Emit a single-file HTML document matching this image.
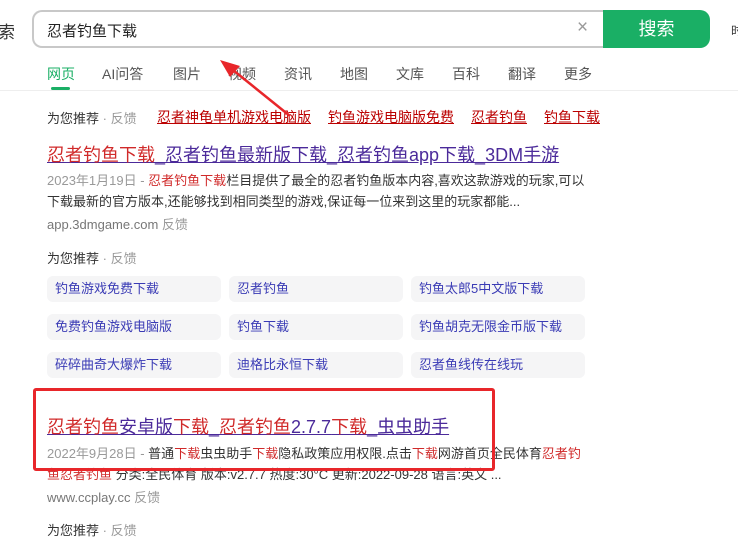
<!DOCTYPE html><html><head><meta charset="utf-8"><style>
body{margin:0;width:738px;height:540px;background:#fff;overflow:hidden;position:relative;font-family:"Liberation Sans","Noto Sans CJK SC",sans-serif;color:#333}
.a{position:absolute;white-space:nowrap}
.r{color:#d02a2a}
.g{color:#999}
.chip{position:absolute;width:174px;height:26px;background:#f5f5f6;border-radius:6px;color:#3a3bb5;font-size:13px;line-height:26px;padding-left:8px;box-sizing:border-box}
.rl{color:#b00;text-decoration:underline;margin-right:17px}
</style></head><body>
<div class="a" style="left:-2px;top:18px;font-size:17px;color:#333">索</div>
<div class="a" style="left:32px;top:10px;width:600px;height:38px;border:2px solid #c8c8c8;border-right:none;border-radius:10px 0 0 10px;box-sizing:border-box"></div>
<div class="a" style="left:47px;top:20px;font-size:15px;color:#222">忍者钓鱼下载</div>
<div class="a" style="left:577px;top:17px;font-size:19px;color:#999">×</div>
<div class="a" style="left:603px;top:10px;width:107px;height:38px;background:#1aaf65;border-radius:0 10px 10px 0;color:#fff;font-size:18px;line-height:38px;text-align:center">搜索</div>
<div class="a" style="left:731px;top:22px;font-size:12px;color:#333">时</div>
<div class="a" style="left:47px;top:64px;font-size:14px;color:#1aaf65">网页</div>
<div class="a" style="left:51px;top:87px;width:19px;height:3px;background:#1aaf65;border-radius:2px"></div>
<div class="a" style="left:102px;top:64px;font-size:14px;color:#555">AI问答</div>
<div class="a" style="left:173px;top:64px;font-size:14px;color:#555">图片</div>
<div class="a" style="left:228px;top:64px;font-size:14px;color:#555">视频</div>
<div class="a" style="left:284px;top:64px;font-size:14px;color:#555">资讯</div>
<div class="a" style="left:340px;top:64px;font-size:14px;color:#555">地图</div>
<div class="a" style="left:396px;top:64px;font-size:14px;color:#555">文库</div>
<div class="a" style="left:452px;top:64px;font-size:14px;color:#555">百科</div>
<div class="a" style="left:508px;top:64px;font-size:14px;color:#555">翻译</div>
<div class="a" style="left:564px;top:64px;font-size:14px;color:#555">更多</div>
<div class="a" style="left:0;top:90px;width:738px;height:1px;background:#eee"></div>
<div class="a" style="left:47px;top:108px;font-size:13px">为您推荐 <span class="g">· 反馈</span></div>
<div class="a" style="left:157px;top:107px;font-size:14px"><span class="rl">忍者神龟单机游戏电脑版</span><span class="rl">钓鱼游戏电脑版免费</span><span class="rl">忍者钓鱼</span><span class="rl">钓鱼下载</span></div>
<div class="a" style="left:47px;top:141px;font-size:18px;color:#4b2a9a;text-decoration:underline"><span class="r">忍者钓鱼下载</span>_忍者钓鱼最新版下载_忍者钓鱼app下载_3DM手游</div>
<div class="a" style="left:47px;top:170px;font-size:13px;line-height:21px;white-space:normal;width:545px"><span class="g">2023年1月19日 - </span><span class="r">忍者钓鱼下载</span>栏目提供了最全的忍者钓鱼版本内容,喜欢这款游戏的玩家,可以下载最新的官方版本,还能够找到相同类型的游戏,保证每一位来到这里的玩家都能...</div>
<div class="a" style="left:47px;top:214px;font-size:13px;color:#777">app.3dmgame.com <span class="g">反馈</span></div>
<div class="a" style="left:47px;top:248px;font-size:13px">为您推荐 <span class="g">· 反馈</span></div>
<div class="chip" style="left:47px;top:276px">钓鱼游戏免费下载</div>
<div class="chip" style="left:229px;top:276px">忍者钓鱼</div>
<div class="chip" style="left:411px;top:276px">钓鱼太郎5中文版下载</div>
<div class="chip" style="left:47px;top:314px">免费钓鱼游戏电脑版</div>
<div class="chip" style="left:229px;top:314px">钓鱼下载</div>
<div class="chip" style="left:411px;top:314px">钓鱼胡克无限金币版下载</div>
<div class="chip" style="left:47px;top:352px">碎碎曲奇大爆炸下载</div>
<div class="chip" style="left:229px;top:352px">迪格比永恒下载</div>
<div class="chip" style="left:411px;top:352px">忍者鱼线传在线玩</div>
<div class="a" style="left:47px;top:413px;font-size:18px;color:#4b2a9a;text-decoration:underline"><span class="r">忍者钓鱼</span>安卓版<span class="r">下载</span>_<span class="r">忍者钓鱼</span>2.7.7<span class="r">下载</span>_虫虫助手</div>
<div class="a" style="left:47px;top:443px;font-size:13px;line-height:21px;white-space:normal;width:540px"><span class="g">2022年9月28日 - </span>普通<span class="r">下载</span>虫虫助手<span class="r">下载</span>隐私政策应用权限.点击<span class="r">下载</span>网游首页全民体育<span class="r">忍者钓鱼忍者钓鱼</span> 分类:全民体育 版本:v2.7.7 热度:30°C 更新:2022-09-28 语言:英文 ...</div>
<div class="a" style="left:47px;top:487px;font-size:13px;color:#777">www.ccplay.cc <span class="g">反馈</span></div>
<div class="a" style="left:47px;top:520px;font-size:13px">为您推荐 <span class="g">· 反馈</span></div>
<div class="a" style="left:33px;top:388px;width:462px;height:83px;border:3px solid #e8262a;border-radius:3px;box-sizing:border-box"></div>
<svg class="a" style="left:0;top:0" width="738" height="540"><line x1="290" y1="116" x2="228" y2="66" stroke="#e8262a" stroke-width="2.5"/><polygon points="220,60 240,66 230,77" fill="#e8262a"/></svg>
</body></html>
